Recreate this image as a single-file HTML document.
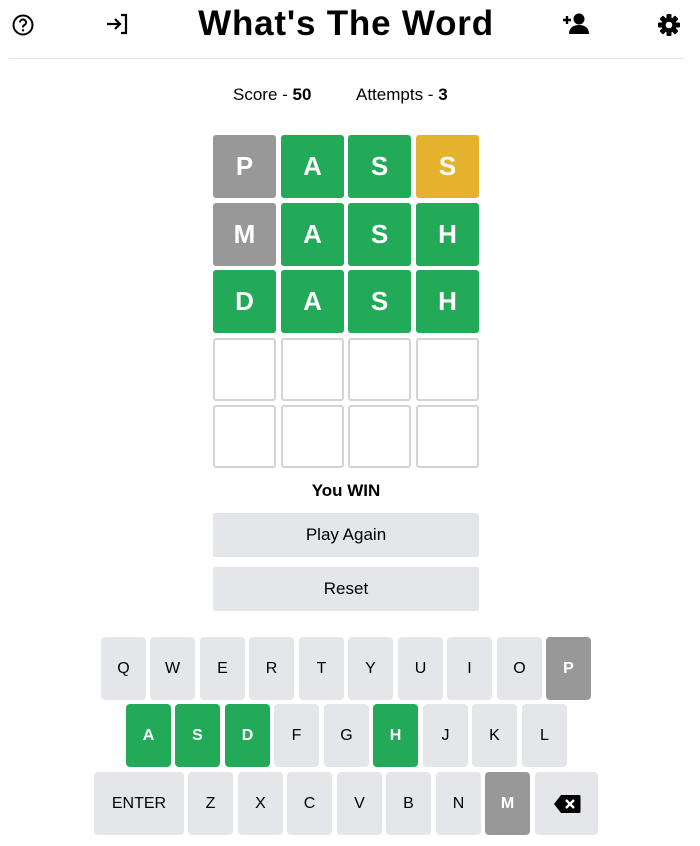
<!DOCTYPE html>
<html><head><style>
*{box-sizing:border-box;margin:0;padding:0}
body{width:700px;height:846px;background:#fff;font-family:"Liberation Sans",sans-serif;color:#000;position:relative;overflow:hidden}
.a{position:absolute}
.title{left:0;width:692px;text-align:center;top:4px;font-size:35px;font-weight:bold;letter-spacing:0.8px}
.line{left:9px;width:675px;top:58px;height:1px;background:#e5e5e5}
.tile{position:absolute;width:63px;height:63px;display:flex;align-items:center;justify-content:center;font-size:26px;font-weight:bold;color:#fff;border-radius:3px}
.g{background:#22aa59}.x{background:#989898}.y{background:#e4b22c}.e{border:2px solid #d4d4d4}
.key{position:absolute;height:63px;width:45px;border-radius:4px;background:#e5e6e9;display:flex;align-items:center;justify-content:center;font-size:16px}
.key.g{background:#22aa59;color:#fff;font-weight:bold}
.key.x{background:#989898;color:#fff;font-weight:bold}
.btn{position:absolute;left:213px;width:266px;height:44px;background:#e5e6e9;display:flex;align-items:center;justify-content:center;font-size:17px;border-radius:2px}
</style></head><body>
<svg class="a" style="left:11px;top:13px" width="24" height="24" viewBox="0 0 24 24"><circle cx="12" cy="12" r="9.5" fill="none" stroke="#000" stroke-width="2"/><path d="M9 9.5a3 3 0 1 1 4 2.8c-.8.4-1 1-1 1.7v.5" fill="none" stroke="#000" stroke-width="2"/><circle cx="12" cy="17.3" r="1.2"/></svg>
<svg class="a" style="left:104px;top:12px" width="26" height="24" viewBox="0 0 26 24"><path d="M3 12h12M11 7l5 5-5 5M17 3h5v18h-5" fill="none" stroke="#000" stroke-width="2.2"/></svg>
<div class="a title">What's The Word</div>
<svg class="a" style="left:562px;top:12px" width="28" height="24" viewBox="0 0 28 24"><path d="M1 8h8M5 4v8" stroke="#000" stroke-width="2.4"/><circle cx="17" cy="7" r="5.5"/><path d="M7 22c0-6 4-9 10-9s10 3 10 9z"/></svg>
<svg class="a" style="left:657px;top:13px" width="24" height="24" viewBox="0 0 24 24"><g transform="translate(12 12)"><g fill="#000"><rect x="-2.5" y="-11" width="5" height="22" rx="1"/><rect x="-2.5" y="-11" width="5" height="22" rx="1" transform="rotate(45)"/><rect x="-2.5" y="-11" width="5" height="22" rx="1" transform="rotate(90)"/><rect x="-2.5" y="-11" width="5" height="22" rx="1" transform="rotate(135)"/></g><circle r="7.5"/><circle r="3.3" fill="#fff"/></g></svg>
<div class="a line"></div>
<div class="a" style="left:233px;top:85px;font-size:17px">Score - <b>50</b></div>
<div class="a" style="left:356px;top:85px;font-size:17px">Attempts - <b>3</b></div>

<div class="tile x" style="left:213px;top:135px">P</div><div class="tile g" style="left:281px;top:135px">A</div><div class="tile g" style="left:348px;top:135px">S</div><div class="tile y" style="left:416px;top:135px">S</div>
<div class="tile x" style="left:213px;top:203px">M</div><div class="tile g" style="left:281px;top:203px">A</div><div class="tile g" style="left:348px;top:203px">S</div><div class="tile g" style="left:416px;top:203px">H</div>
<div class="tile g" style="left:213px;top:270px">D</div><div class="tile g" style="left:281px;top:270px">A</div><div class="tile g" style="left:348px;top:270px">S</div><div class="tile g" style="left:416px;top:270px">H</div>
<div class="tile e" style="left:213px;top:338px"></div><div class="tile e" style="left:281px;top:338px"></div><div class="tile e" style="left:348px;top:338px"></div><div class="tile e" style="left:416px;top:338px"></div>
<div class="tile e" style="left:213px;top:405px"></div><div class="tile e" style="left:281px;top:405px"></div><div class="tile e" style="left:348px;top:405px"></div><div class="tile e" style="left:416px;top:405px"></div>

<div class="a" style="left:0;width:692px;text-align:center;top:481px;font-size:17px;font-weight:bold">You WIN</div>
<div class="btn" style="top:513px">Play Again</div>
<div class="btn" style="top:567px">Reset</div>

<div class="key" style="left:101px;top:637px">Q</div><div class="key" style="left:150px;top:637px">W</div><div class="key" style="left:200px;top:637px">E</div><div class="key" style="left:249px;top:637px">R</div><div class="key" style="left:299px;top:637px">T</div><div class="key" style="left:348px;top:637px">Y</div><div class="key" style="left:398px;top:637px">U</div><div class="key" style="left:447px;top:637px">I</div><div class="key" style="left:497px;top:637px">O</div><div class="key x" style="left:546px;top:637px">P</div>
<div class="key g" style="left:126px;top:704px">A</div><div class="key g" style="left:175px;top:704px">S</div><div class="key g" style="left:225px;top:704px">D</div><div class="key" style="left:274px;top:704px">F</div><div class="key" style="left:324px;top:704px">G</div><div class="key g" style="left:373px;top:704px">H</div><div class="key" style="left:423px;top:704px">J</div><div class="key" style="left:472px;top:704px">K</div><div class="key" style="left:522px;top:704px">L</div>
<div class="key" style="left:94px;top:772px;width:90px">ENTER</div><div class="key" style="left:188px;top:772px">Z</div><div class="key" style="left:238px;top:772px">X</div><div class="key" style="left:287px;top:772px">C</div><div class="key" style="left:337px;top:772px">V</div><div class="key" style="left:386px;top:772px">B</div><div class="key" style="left:436px;top:772px">N</div><div class="key x" style="left:485px;top:772px">M</div>
<div class="key" style="left:535px;top:772px;width:63px"><svg width="28" height="20" viewBox="0 0 28 20"><path d="M8 1h18a1.5 1.5 0 0 1 1.5 1.5v15A1.5 1.5 0 0 1 26 19H8L1 10z"/><path d="M13 6l8 8M21 6l-8 8" stroke="#fff" stroke-width="2.4"/></svg></div>
</body></html>
